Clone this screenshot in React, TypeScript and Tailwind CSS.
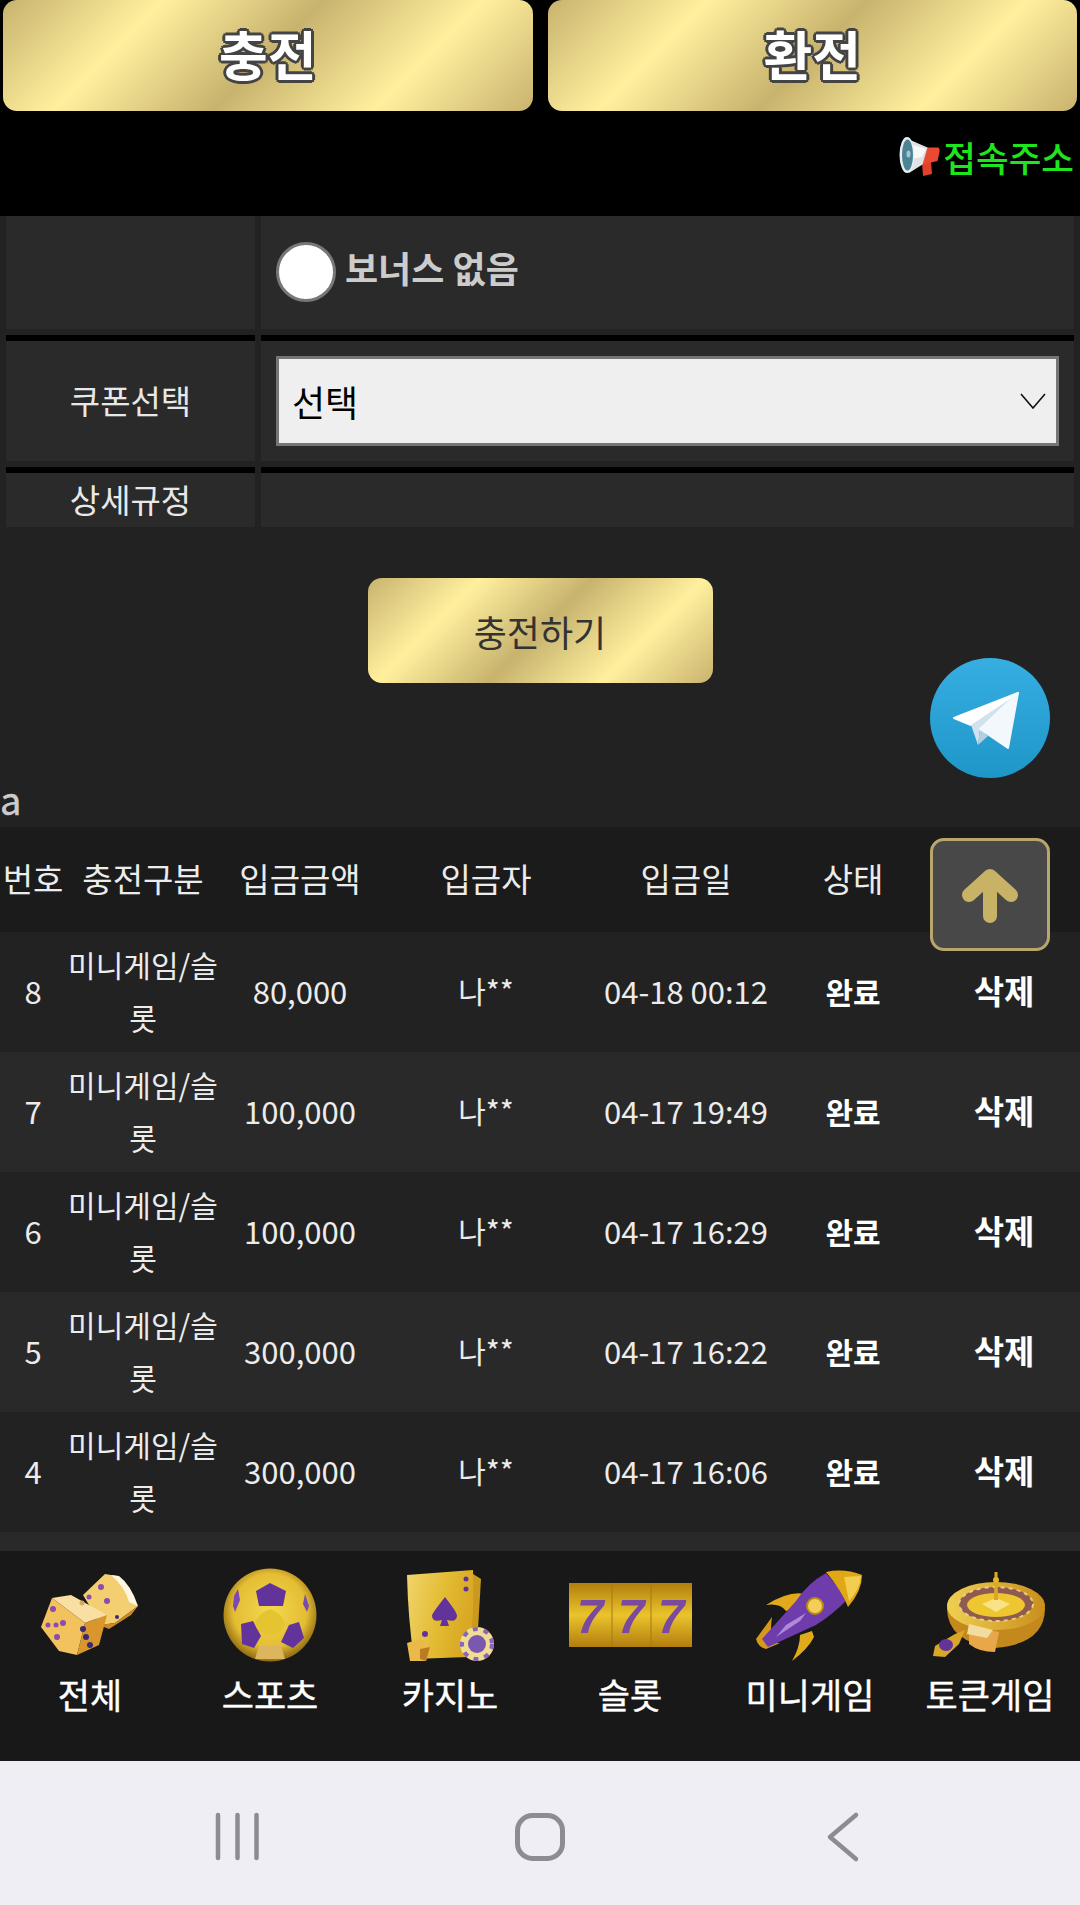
import React from 'react';

const FONT = "font-['Noto_Sans_CJK_KR','Noto_Sans',sans-serif]";
const GOLD =
  'bg-[linear-gradient(135deg,#c8b36e_0%,#fff09e_25%,#c8b36e_50%,#fff09e_75%,#c8b36e_100%)]';

const deposits = [
  { id: 8, amount: '80,000', date: '04-18 00:12' },
  { id: 7, amount: '100,000', date: '04-17 19:49' },
  { id: 6, amount: '100,000', date: '04-17 16:29' },
  { id: 5, amount: '300,000', date: '04-17 16:22' },
  { id: 4, amount: '300,000', date: '04-17 16:06' }
];

const COLS = 'grid grid-cols-[66px_154px_160px_212px_188px_146px_154px]';

const Megaphone = () => (
  <svg width="44" height="40" viewBox="0 0 44 40">
    <path d="M23 26 L32 24 L33 37 L24 39 Z" fill="#e0402c" />
    <path d="M28 10.500 L39 10.500 Q41 11 40.500 15 L38.500 24 L23 27.500 Z" fill="#ea4a32" />
    <path d="M6 0.700 L28.500 10.500 L23.500 27.500 L10 36 Z" fill="#dfe3e6" />
    <path d="M14 8 L27 12 L23 20 L13 22 Z" fill="#f7f8f9" />
    <ellipse cx="8" cy="18" rx="7.500" ry="18" fill="#e8eef0" />
    <ellipse cx="8.500" cy="18" rx="5.500" ry="15.500" fill="#4c8496" />
    <ellipse cx="9.500" cy="17" rx="2" ry="3.500" fill="#a5c6d0" />
  </svg>
);

const Telegram = () => (
  <svg width="120" height="120" viewBox="0 0 120 120">
    <defs>
      <linearGradient id="tg" x1="0" y1="0" x2="0" y2="1">
        <stop offset="0" stopColor="#37aee2" />
        <stop offset="1" stopColor="#1e96c8" />
      </linearGradient>
    </defs>
    <circle cx="60" cy="60" r="60" fill="url(#tg)" />
    <path d="M88 35 L24 60 L41 67 Z" fill="#ffffff" stroke="#ffffff" strokeLinejoin="round" strokeWidth="2" />
    <path d="M86 37 L41 67 L48 87 L50 71 Z" fill="#d2e1ee" />
    <path d="M48 87 L58 78 L50 71 Z" fill="#b5cfe2" />
    <path d="M88 35 L50 71 L78 90 Z" fill="#f3f8fc" stroke="#f3f8fc" strokeLinejoin="round" strokeWidth="2" />
  </svg>
);

const UpArrow = () => (
  <svg width="114" height="107" viewBox="3 3 114 107" fill="none" stroke="#c8b266" strokeWidth="14" strokeLinecap="round" strokeLinejoin="round">
    <path d="M60 40 V78" />
    <path d="M39 57 L60 38 L81 57" />
  </svg>
);

const DiceIcon = () => (
  <svg width="98" height="84" viewBox="0 0 98 84">
    <path d="M42 22 L64 1 L76 3 L97 33 L74 50 L60 52 Z" fill="#f3cf72" />
    <path d="M70 2 L78 3 Q90 12 97 33 L88 29 Q84 14 70 2 Z" fill="#fff6e2" />
    <path d="M58 52 L74 50 L97 33 L90 42 L68 56 Z" fill="#cc8a28" />
    <path d="M11 25 L30 22 L66 42 L44 50 Z" fill="#f9e0a2" />
    <path d="M11 25 L44 50 L36 82 L18 78 L0 54 Z" fill="#f2c35c" />
    <path d="M44 50 L66 42 L58 72 L36 82 Z" fill="#d9962f" />
    <g fill="#8a4cb0">
      <circle cx="12" cy="36" r="3" />
      <circle cx="22" cy="50" r="3" />
      <circle cx="7" cy="52" r="2.500" />
      <circle cx="15" cy="52" r="2.500" />
      <circle cx="16" cy="64" r="3" />
      <circle cx="60" cy="14" r="3" />
      <circle cx="48" cy="24" r="2.500" />
      <circle cx="66" cy="28" r="3" />
      <circle cx="41" cy="30" r="2.500" fill="#d9a860" />
    </g>
    <g fill="#3a2a70">
      <circle cx="42" cy="56" r="3" />
      <circle cx="45" cy="64" r="3" />
      <circle cx="49" cy="72" r="3" />
      <circle cx="76" cy="44" r="2" />
    </g>
  </svg>
);

const BallIcon = () => (
  <svg width="94" height="94" viewBox="0 0 94 94">
    <defs>
      <radialGradient id="ball" cx="0.5" cy="0.45" r="0.55">
        <stop offset="0" stopColor="#f3d94e" />
        <stop offset="0.72" stopColor="#e4bd34" />
        <stop offset="1" stopColor="#8f6a10" />
      </radialGradient>
    </defs>
    <circle cx="47" cy="47" r="46.500" fill="url(#ball)" />
    <path d="M47 15 L63 23 L60 38 L36 38 L33 23 Z" fill="#63339c" />
    <path d="M18 56 L30 53 L38 68 L31 80 L19 76 Z" fill="#63339c" />
    <path d="M76 54 L81 70 L70 80 L58 74 L66 57 Z" fill="#63339c" />
    <path d="M11 28 L15 21 L17 32 L12 44 L10 38 Z" fill="#7b4ab0" />
    <path d="M82 26 L86 38 L84 44 L80 36 Z" fill="#7b4ab0" />
    <path d="M47 41 Q60 46 62 56 Q60 66 47 67 Q34 66 32 56 Q34 46 47 41 Z" fill="#e5c431" />
    <path d="M36 78 L58 78 L62 91 L32 91 Z" fill="#dcb65e" />
  </svg>
);

const CardsIcon = () => (
  <svg width="88" height="92" viewBox="0 0 88 92">
    <defs>
      <linearGradient id="card" x1="0" y1="0" x2="1" y2="0.3">
        <stop offset="0" stopColor="#f1d56c" />
        <stop offset="0.6" stopColor="#e3bb32" />
        <stop offset="1" stopColor="#d9a824" />
      </linearGradient>
    </defs>
    <path d="M64 3 L75 10 L72 60 L60 60 Z" fill="#c99a1d" />
    <path d="M1 6 L67 1 Q69 50 62 88 L8 90 Q2 50 1 6 Z" fill="url(#card)" />
    <path d="M39 28 Q50 42 51 46 Q51 54 41 51 L43 57 L34 57 L36 51 Q26 54 26 46 Q28 42 39 28 Z" fill="#63339c" />
    <circle cx="60" cy="10" r="2.500" fill="#63339c" />
    <circle cx="60" cy="20" r="2.500" fill="#63339c" />
    <circle cx="19" cy="65" r="3" fill="#63339c" />
    <path d="M1 74 L14 70 L24 78 L20 92 L4 92 Z" fill="#eab94a" />
    <path d="M14 80 L24 78 L20 92 L14 90 Z" fill="#b97c24" />
    <circle cx="71" cy="75" r="17" fill="#f1dc93" />
    <circle cx="71" cy="75" r="15" fill="none" stroke="#8a64b8" strokeWidth="4" strokeDasharray="5 6" />
    <circle cx="71" cy="75" r="9" fill="#7a58b0" />
  </svg>
);

const SlotIcon = () => (
  <svg width="123" height="64" viewBox="0 0 123 64">
    <defs>
      <linearGradient id="reel" x1="0" y1="0" x2="0" y2="1">
        <stop offset="0" stopColor="#b27e0e" />
        <stop offset="0.5" stopColor="#eac42c" />
        <stop offset="1" stopColor="#b27e0e" />
      </linearGradient>
    </defs>
    <rect width="123" height="64" fill="url(#reel)" />
    <path d="M43 0 V64 M82 0 V64" stroke="#a87a12" strokeWidth="1" />
    <g fontFamily="'Liberation Sans', sans-serif" fontWeight="700" fontStyle="italic" fontSize="48" fill="#7a4a9e" textAnchor="middle">
      <text x="21" y="50">7</text>
      <text x="62" y="50">7</text>
      <text x="102" y="50">7</text>
    </g>
  </svg>
);

const RocketIcon = () => (
  <svg width="108" height="92" viewBox="0 0 108 92">
    <path d="M52 26 Q36 20 10 36 Q24 34 30 42 L50 36 Z" fill="#e0aa1c" />
    <path d="M44 66 L56 62 L58 68 Q52 80 36 92 Q44 78 44 66 Z" fill="#e0aa1c" />
    <path d="M16 48 L0 70 Q2 78 10 80 L24 74 Q12 74 16 48 Z" fill="#d49a18" />
    <path d="M70 4 L92 30 Q76 46 60 56 L12 78 L6 70 L40 32 Q52 14 70 4 Z" fill="#6e3cab" />
    <path d="M30 56 L50 44 L44 52 L20 68 Z" fill="#b08ad8" />
    <path d="M70 3 Q88 -1 106 6 Q106 22 92 38 Q86 22 70 3 Z" fill="#dfa814" />
    <path d="M88 8 L105 7 Q104 20 93 32 Z" fill="#f2ce50" />
    <circle cx="59" cy="37" r="8" fill="#f3cf55" stroke="#b98a18" strokeWidth="2" />
  </svg>
);

const RouletteIcon = () => (
  <svg width="114" height="86" viewBox="0 0 114 86">
    <defs>
      <linearGradient id="rim" x1="0" y1="0" x2="1" y2="0">
        <stop offset="0" stopColor="#f0cf52" />
        <stop offset="1" stopColor="#c98e1c" />
      </linearGradient>
    </defs>
    <path d="M14 36 Q14 70 62 76 Q112 72 112 36 Z" fill="#c4891c" />
    <ellipse cx="63" cy="34" rx="49" ry="24" fill="url(#rim)" />
    <ellipse cx="63" cy="32" rx="37" ry="17" fill="#8f5a50" />
    <ellipse cx="63" cy="32" rx="37" ry="17" fill="none" stroke="#e7cf80" strokeWidth="2" strokeDasharray="4 4" />
    <ellipse cx="63" cy="33" rx="29" ry="12" fill="#eec62f" />
    <path d="M49 32 L63 26 L77 32 L63 40 Z" fill="#f8e487" />
    <path d="M61.500 0 H64.500 L65 28 H61 Z" fill="#d8a826" />
    <circle cx="63" cy="8" r="3" fill="#e2b52c" />
    <path d="M36 54 L66 60 L62 80 Q46 80 36 72 Z" fill="#e8a84a" />
    <path d="M36 52 L60 58 L54 66 L34 62 Z" fill="#f3dca0" />
    <path d="M32 58 L22 62 L2 74 L0 84 L12 85 L26 72 Z" fill="#d9a52a" />
    <ellipse cx="13" cy="73" rx="7" ry="6" fill="#63339c" />
  </svg>
);

const games = [
  { label: '전체', icon: <DiceIcon /> },
  { label: '스포츠', icon: <BallIcon /> },
  { label: '카지노', icon: <CardsIcon /> },
  { label: '슬롯', icon: <SlotIcon /> },
  { label: '미니게임', icon: <RocketIcon /> },
  { label: '토큰게임', icon: <RouletteIcon /> }
];

const TopButton = ({ label }: { label: string }) => (
  <button
    className={`h-[111px] rounded-[14px] ${GOLD} flex items-center justify-center text-[53px] font-bold leading-none text-white pb-[4px] [text-shadow:2px_2px_0_#444,-2px_-2px_0_#444,2px_-2px_0_#444,-2px_2px_0_#444,3px_0_0_#444,-3px_0_0_#444,0_3px_0_#444,0_-3px_0_#444]`}
  >
    {label}
  </button>
);

const FormRow = ({
  label,
  children,
  height,
  last
}: {
  label?: string;
  children?: React.ReactNode;
  height: string;
  last?: boolean;
}) => (
  <div className="grid grid-cols-[249px_813px] gap-x-[6px] px-[6px]">
    <div className={last ? '' : 'border-b-[6px] border-black pb-[6px]'}>
      <div className={`${height} bg-[#2a2a2a] flex items-center justify-center text-[33px] text-[#e8e8e8]`}>
        {label}
      </div>
    </div>
    <div className={last ? '' : 'border-b-[6px] border-black pb-[6px]'}>
      <div className={`${height} bg-[#2a2a2a] flex items-center px-[15px]`}>{children}</div>
    </div>
  </div>
);

const DepositRow = ({ item, striped }: { item: (typeof deposits)[number]; striped: boolean }) => (
  <div className={`${COLS} h-[120px] items-center text-center text-[31px] text-[#ececec] ${striped ? 'bg-[#292929]' : 'bg-[#222222]'}`}>
    <div className="pb-[2px]">{item.id}</div>
    <div className="break-all text-[30px] leading-[53px] px-[2px] pb-[2px]">미니게임/슬롯</div>
    <div className="pb-[2px]">{item.amount}</div>
    <div className="pb-[4px] text-[30px]">나**</div>
    <div className="pb-[2px]">{item.date}</div>
    <div className="font-bold text-[30px] text-white pb-[2px]">완료</div>
    <div className="font-bold text-[33px] text-white pl-[2px] pb-[2px]">삭제</div>
  </div>
);

const App = () => {
  return (
    <div className={`relative w-[1080px] h-[1905px] overflow-hidden flex flex-col bg-[#222222] ${FONT}`}>
      <div className="flex-1 overflow-hidden">
        <div className="bg-black h-[216px]">
          <div className="grid grid-cols-2 gap-x-[15px] px-[3px]">
            <TopButton label="충전" />
            <TopButton label="환전" />
          </div>
          <div className="flex items-center justify-end pr-[6px] pt-[24px]">
            <Megaphone />
            <span className="text-[35.500px] leading-[44px] font-medium text-[#1fe51f]">접속주소</span>
          </div>
        </div>

        <FormRow height="h-[113px]">
          <span className="w-[60px] h-[60px] mb-[2px] rounded-full bg-white border-[3px] border-[#777777]" />
          <span className="ml-[9px] mb-[12px] text-[36px] font-bold text-[#cccccc]">보너스 없음</span>
        </FormRow>
        <FormRow height="h-[120px]" label="쿠폰선택">
          <div className="w-[783px] h-[90px] bg-[#efefef] border-[3px] border-[#767676] flex items-center justify-between pl-[13px] pr-[10px] text-[36px] text-black">
            <span>선택</span>
            <svg width="26" height="16" viewBox="0 0 26 16" fill="none" stroke="#111111" strokeWidth="1.600">
              <path d="M1 1 L13 15 L25 1" />
            </svg>
          </div>
        </FormRow>
        <FormRow height="h-[54px]" label="상세규정" last />

        <div className="flex justify-center pt-[51px]">
          <button className={`w-[345px] h-[105px] rounded-[14px] ${GOLD} text-[36px] text-[#333333]`}>충전하기</button>
        </div>

        <div className="h-[144px] flex items-end text-[38px] leading-[56px] text-[#cccccc] [-webkit-text-stroke:0.5px_#cccccc]">a</div>

        <div className={`${COLS} h-[105px] items-center text-center text-[33px] text-[#ececec] bg-[#1b1b1b] pb-[2px]`}>
          <div>번호</div>
          <div>충전구분</div>
          <div>입금금액</div>
          <div>입금자</div>
          <div>입금일</div>
          <div>상태</div>
          <div />
        </div>
        {deposits.map((item, i) => (
          <DepositRow key={item.id} item={item} striped={i % 2 === 1} />
        ))}
        <div className="h-[30px] bg-[#292929]" />
      </div>

      {/* floating buttons */}
      <div className="absolute left-[930px] top-[658px]">
        <Telegram />
      </div>
      <div className="absolute left-[930px] top-[838px] w-[120px] h-[113px] rounded-[14px] bg-[#484848] border-[3px] border-[#b8a76c]">
        <UpArrow />
      </div>

      <div className="h-[210px] bg-[#181818] grid grid-cols-6 shrink-0">
        {games.map((game) => (
          <div key={game.label} className="flex flex-col items-center">
            <div className="h-[112px] pt-[16px] flex items-center justify-center blur-[0.5px]">{game.icon}</div>
            <span className="text-[35px] leading-[50px] text-white mt-[6px] whitespace-nowrap [-webkit-text-stroke:0.4px_#ffffff]">{game.label}</span>
          </div>
        ))}
      </div>

      <div className="h-[144px] bg-[#eeeef4] shrink-0 flex items-center justify-center">
        <svg width="1080" height="144" viewBox="0 0 1080 144" fill="none" stroke="#8c8c94">
          <path d="M218 54 V97 M237.500 54 V97 M256.500 54 V97" strokeWidth="4.500" strokeLinecap="round" />
          <rect x="517.500" y="54.500" width="45" height="43" rx="15" strokeWidth="5" />
          <path d="M856 54 L830 76 L856 98" strokeWidth="4.500" strokeLinecap="round" strokeLinejoin="round" />
        </svg>
      </div>
    </div>
  );
};

export default App;
